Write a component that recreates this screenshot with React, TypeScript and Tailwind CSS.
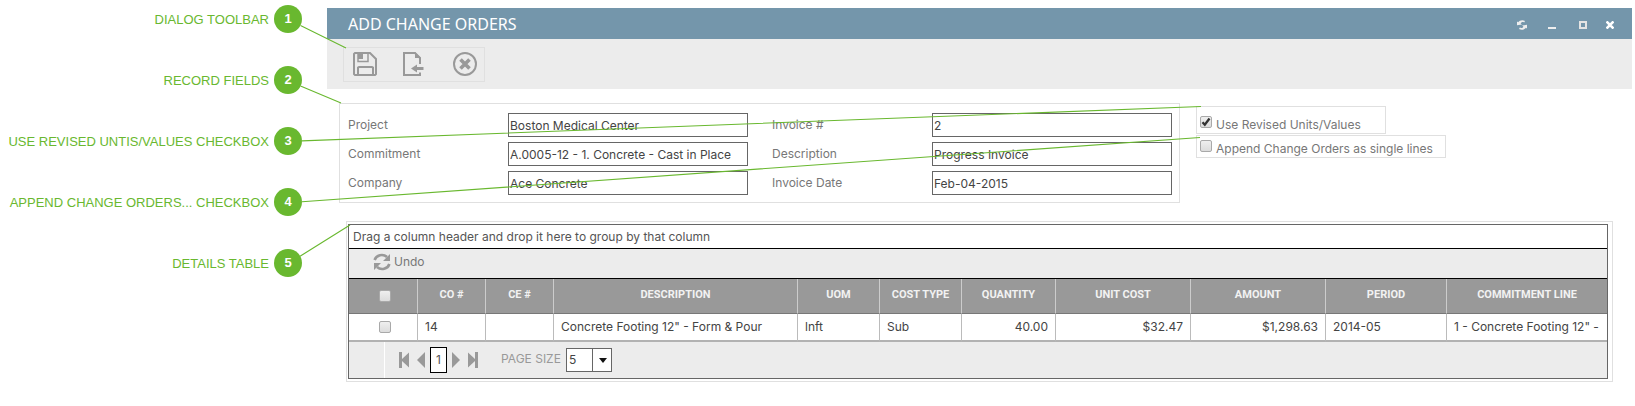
import React from "react";

const callouts = [
  "DIALOG TOOLBAR",
  "RECORD FIELDS",
  "USE REVISED UNTIS/VALUES CHECKBOX",
  "APPEND CHANGE ORDERS... CHECKBOX",
  "DETAILS TABLE",
];

const columns = [
  { title: "CO #", value: "14", width: "w-[68px]", align: "text-left" },
  { title: "CE #", value: "", width: "w-[68px]", align: "text-left" },
  { title: "DESCRIPTION", value: 'Concrete Footing 12" - Form & Pour', width: "w-[244px]", align: "text-left" },
  { title: "UOM", value: "lnft", width: "w-[82px]", align: "text-left" },
  { title: "COST TYPE", value: "Sub", width: "w-[82px]", align: "text-left" },
  { title: "QUANTITY", value: "40.00", width: "w-[94px]", align: "text-right" },
  { title: "UNIT COST", value: "$32.47", width: "w-[135px]", align: "text-right" },
  { title: "AMOUNT", value: "$1,298.63", width: "w-[135px]", align: "text-right" },
  { title: "PERIOD", value: "2014-05", width: "w-[121px]", align: "text-left" },
  { title: "COMMITMENT LINE", value: '1 - Concrete Footing 12" -', width: "", align: "text-left" },
];

function Callouts() {
  return (
    <ol className="flex w-[302px] shrink-0 flex-col gap-[33px] pt-[5px]">
      {callouts.map((label, i) => (
        <li key={label} className="flex h-7 items-center justify-end gap-[5px] text-[13px] whitespace-nowrap text-[#69b82f]">
          <span className="pt-0.5">{label}</span>
          <span className="flex size-7 shrink-0 items-center justify-center rounded-full bg-[#69b82f] text-[13px] font-bold text-white">
            {i + 1}
          </span>
        </li>
      ))}
    </ol>
  );
}

function CalloutLines() {
  return (
    <svg className="pointer-events-none absolute top-0 left-0" width="1210" height="270" fill="none" stroke="#69b82f" strokeWidth="1.1" aria-hidden="true">
      <path d="M300.500 25.500L346 48M300.500 86L341 103M302 140.900L1201 106.500M302 201.700L1200 137.500M300 256.300L350 225" />
    </svg>
  );
}

function TickBox({ id, label, checked = false }: { id: string; label?: string; checked?: boolean }) {
  return (
    <span className="grid size-3 shrink-0">
      <input
        id={id}
        type="checkbox"
        aria-label={label}
        defaultChecked={checked}
        className="peer col-start-1 row-start-1 m-0 size-3 appearance-none rounded-[2px] border border-[#a9a9a9] bg-linear-to-b from-[#efefef] to-[#dcdcdc]"
      />
      <svg viewBox="0 0 12 12" className="pointer-events-none invisible col-start-1 row-start-1 size-3 peer-checked:visible" fill="none" stroke="#333" strokeWidth="2.3" aria-hidden="true">
        <path d="M2.500 6.300L4.800 8.700L9.500 2.500" />
      </svg>
    </span>
  );
}

function Field({ id, label, value }: { id: string; label: string; value: string }) {
  return (
    <div className="flex h-6 items-center">
      <label htmlFor={id} className="w-40 shrink-0 text-[#777]">{label}</label>
      <input id={id} defaultValue={value} className="h-6 w-60 border border-[#666] bg-white px-px text-[#444]" />
    </div>
  );
}

function TitleBar() {
  return (
    <header className="flex h-[31px] items-center bg-[#7496ab] pr-[18px] pl-[21px] text-white">
      <h1 className="grow font-['Noto_Sans',sans-serif] text-[16px] leading-5">ADD CHANGE ORDERS</h1>
      <button aria-label="Refresh" className="mt-0.5 mr-[21px]">
        <svg width="10" height="10" viewBox="0 0 10 10" fill="#eee" aria-hidden="true">
          <path d="M0 1.500L1.200 2.300C2.500 .3 5.500 -.5 8 1L7.200 2.400C5.700 1.600 4.200 2 3.600 3.600L5 4.600L0 5.200zM10 8.500L8.800 7.700C7.500 9.700 4.500 10.500 2 9L2.800 7.600C4.300 8.400 5.800 8 6.400 6.400L5 5.400L10 4.800z" />
        </svg>
      </button>
      <button aria-label="Minimize" className="mt-0.5 mr-[23px]">
        <svg width="8" height="8" aria-hidden="true"><path d="M0 6h8v2H0z" fill="#eee" /></svg>
      </button>
      <button aria-label="Maximize" className="mt-0.5 mr-[19px]">
        <svg width="8" height="8" aria-hidden="true"><path d="M1 1h6v6H1z" fill="none" stroke="#e4e4e4" strokeWidth="2" /></svg>
      </button>
      <button aria-label="Close" className="mt-0.5">
        <svg width="8" height="8" aria-hidden="true"><path d="M.5 .5l7 7M7.500 .5L.5 7.500" stroke="#fff" strokeWidth="2.600" /></svg>
      </button>
    </header>
  );
}

function Toolbar() {
  return (
    <div className="flex h-[50px] items-center bg-[#ececec] px-4 pb-1">
      <div className="mt-1 flex h-[35px] w-[142px] items-center gap-[26px] border border-[#e0e0e0] pl-[9px]">
        <button aria-label="Save">
          <svg width="24" height="24" viewBox="0 0 24 24" fill="none" stroke="#999" strokeWidth="2" aria-hidden="true">
            <path d="M2 1H17L23 7V22L22 23H2L1 22V2zM5 23V15.500L6 15H19L20 15.500V23" />
            <path d="M5 1V9.500H15V1" strokeWidth="1.500" />
            <path d="M5 1h5v6H5z" fill="#999" stroke="none" />
          </svg>
        </button>
        <button aria-label="Save and close">
          <svg width="24" height="24" viewBox="0 0 24 24" fill="none" stroke="#999" strokeWidth="2" aria-hidden="true">
            <path d="M17 12V6L12 1H1V23H17V20.500" />
            <path d="M12 0V6H18z" fill="#999" stroke="none" />
            <path d="M8 16.500L14 12.500V15H20.500V18H14V20.500z" fill="#999" stroke="none" />
          </svg>
        </button>
        <button aria-label="Cancel">
          <svg width="24" height="24" viewBox="0 0 24 24" fill="none" stroke="#999" strokeWidth="2" aria-hidden="true">
            <circle cx="12" cy="12" r="11" />
            <path d="M7.500 7.500l9 9M16.500 7.500l-9 9" strokeWidth="3.600" />
          </svg>
        </button>
      </div>
    </div>
  );
}

function Pager() {
  return (
    <div className="flex h-9 bg-[#ececec]">
      <div className="w-9 shrink-0 border-r border-white" />
      <div className="flex items-center pl-3.5 text-[#999]">
        <button aria-label="First page"><svg width="10" height="16" fill="#999" aria-hidden="true"><path d="M0 0h3v7l7-6.500v15L3 9v7H0z" /></svg></button>
        <button aria-label="Previous page" className="ml-2"><svg width="8" height="16" fill="#999" aria-hidden="true"><path d="M8 0v16L0 8z" /></svg></button>
        <button aria-current="page" className="ml-[5px] h-[26px] w-[17px] border border-black bg-white text-[#555]">1</button>
        <button aria-label="Next page" className="ml-[5px]"><svg width="8" height="16" fill="#999" aria-hidden="true"><path d="M0 0v16L8 8z" /></svg></button>
        <button aria-label="Last page" className="ml-2"><svg width="10" height="16" fill="#999" aria-hidden="true"><path d="M10 0H7v7L0 .5v15L7 9v7h3z" /></svg></button>
        <label htmlFor="page-size" className="ml-[23px] w-[65px] pb-0.5 whitespace-nowrap">PAGE SIZE</label>
        <span className="grid h-6 w-[46px]">
          <select id="page-size" className="col-start-1 row-start-1 appearance-none border border-[#666] bg-white px-0.5 text-[#444]">
            <option>5</option>
            <option>10</option>
          </select>
          <span className="pointer-events-none col-start-1 row-start-1 my-px flex w-5 items-center justify-center self-stretch justify-self-end border-l border-[#666]">
            <svg width="8" height="5" aria-hidden="true"><path d="M0 0h8L4 5z" fill="#111" /></svg>
          </span>
        </span>
      </div>
    </div>
  );
}

function DetailsTable() {
  return (
    <section className="mt-[18px] mr-[19px] ml-[19px] border border-[#e0e0e0] pt-0.5 pr-1 pb-0.5 pl-px">
      <div className="border border-[#666]">
        <p className="h-6 border-b border-black pl-1 leading-[23px] text-[#555]">Drag a column header and drop it here to group by that column</p>
        <div className="flex h-[30px] items-center border-b border-black bg-[#ececec] pb-1 pl-6">
          <button className="flex items-center gap-[3px] text-[#777]">
            <svg width="18" height="18" viewBox="0 0 18 18" aria-hidden="true">
              <path d="M1.600 7A7.500 7 0 0 1 14 4M16.400 11A7.500 7 0 0 1 4 14" fill="none" stroke="#999" strokeWidth="2.600" />
              <path d="M17 1v7h-7zM1 17v-7h7z" fill="#999" />
            </svg>
            Undo
          </button>
        </div>
        <table className="w-full table-fixed border-separate border-spacing-0">
          <thead>
            <tr className="h-[35px] bg-[#999] font-['Roboto',sans-serif] text-[11px] text-[#f2f2f2]">
              <th className="w-[69px] border-r border-b border-r-[#ccc] border-b-[#777] p-0">
                <span className="flex justify-center pl-1"><TickBox id="all" label="Select all" /></span>
              </th>
              {columns.map((c) => (
                <th key={c.title} className={`${c.width} border-r border-b border-r-[#ccc] border-b-[#777] p-0 pb-0.5 font-bold whitespace-nowrap last:border-r-0`}>{c.title}</th>
              ))}
            </tr>
          </thead>
          <tbody>
            <tr className="h-7 bg-white text-[#444]">
              <td className="border-r border-b-2 border-r-[#bbb] border-b-[#b2b2b2] p-0">
                <span className="flex justify-center pl-1"><TickBox id="row-14" label="Select line 14" /></span>
              </td>
              {columns.map((c) => (
                <td key={c.title} className={`${c.align} overflow-hidden border-r border-b-2 border-r-[#bbb] border-b-[#b2b2b2] px-[7px] py-0 whitespace-nowrap last:border-r-0 last:pr-0`}>{c.value}</td>
              ))}
            </tr>
          </tbody>
        </table>
        <Pager />
      </div>
    </section>
  );
}

export default function App() {
  return (
    <div className="relative flex gap-[25px] bg-white font-['Liberation_Sans',sans-serif]">
      <Callouts />
      <main className="mt-2 mr-[3px] min-w-0 grow font-['Inter',sans-serif] text-[12px] leading-4">
        <TitleBar />
        <Toolbar />
        <div className="mt-3.5 ml-3 flex items-start gap-4">
          <div className="grid grid-cols-[400px_400px] gap-x-6 gap-y-[5px] border border-[#e0e0e0] pt-[9px] pr-[7px] pb-[7px] pl-2">
            <Field id="project" label="Project" value="Boston Medical Center" />
            <Field id="invoice" label="Invoice #" value="2" />
            <Field id="commitment" label="Commitment" value="A.0005-12 - 1. Concrete - Cast in Place" />
            <Field id="description" label="Description" value="Progress Invoice" />
            <Field id="company" label="Company" value="Ace Concrete" />
            <Field id="date" label="Invoice Date" value="Feb-04-2015" />
          </div>
          <div className="flex flex-col items-start gap-px pt-[3px] text-[#777]">
            <div className="flex h-7 w-[190px] items-start gap-1 border border-[#e0e0e0] px-[3px] pt-[9px]">
              <TickBox id="revised" checked />
              <label htmlFor="revised" className="pt-px whitespace-nowrap">Use Revised Units/Values</label>
            </div>
            <div className="flex h-[23px] w-[250px] items-start gap-1 border border-[#e0e0e0] px-[3px] pt-1">
              <TickBox id="append" />
              <label htmlFor="append" className="pt-px whitespace-nowrap">Append Change Orders as single lines</label>
            </div>
          </div>
        </div>
        <DetailsTable />
      </main>
      <CalloutLines />
    </div>
  );
}
